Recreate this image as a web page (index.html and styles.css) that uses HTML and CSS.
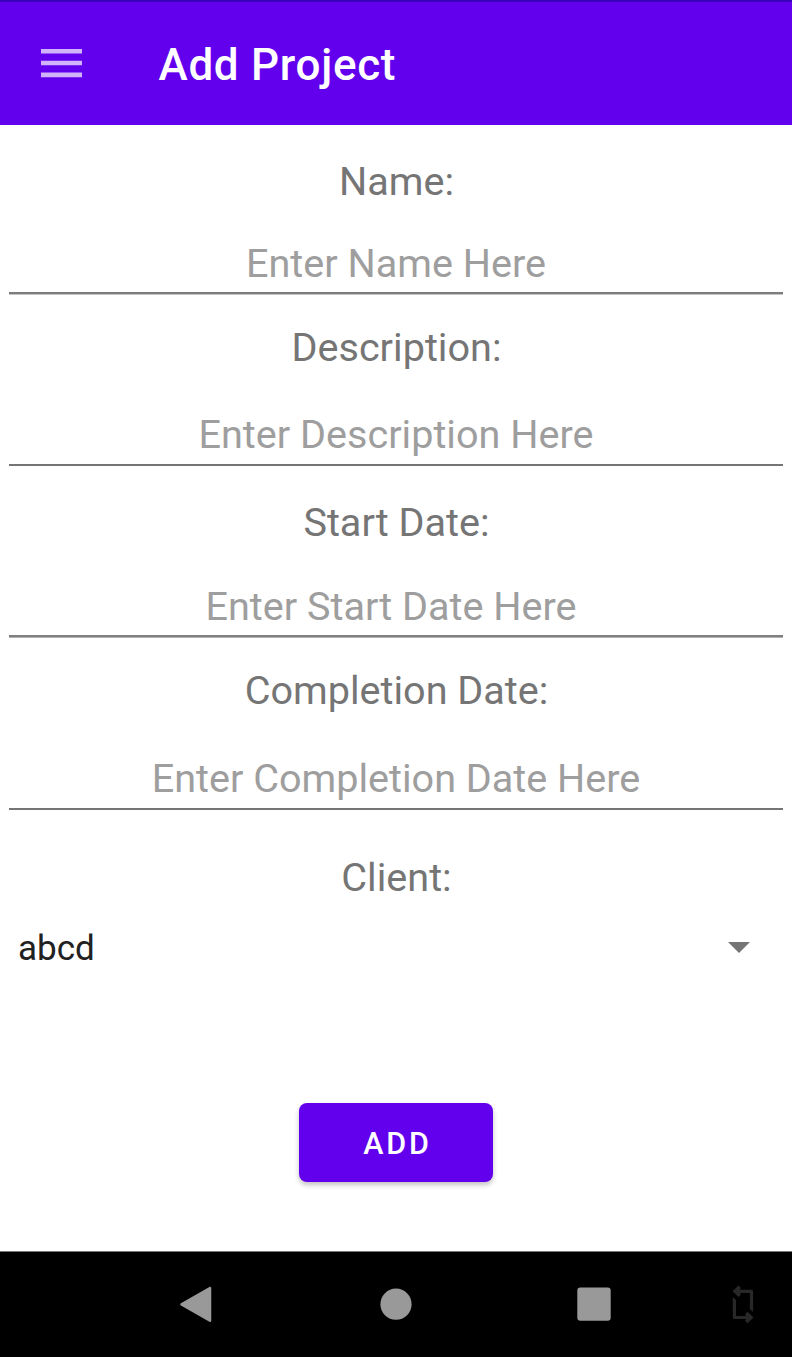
FILE: index.html
```html
<!DOCTYPE html>
<html lang="en">
<head>
<meta charset="utf-8">
<title>Add Project</title>
<link rel="stylesheet" href="styles.css">
</head>
<body>
<div class="screen">
  <header class="app-bar">
    <svg class="menu-icon" width="41" height="29" viewBox="0 0 41 29"><path d="M0 2.200h41M0 14h41M0 25.900h41" stroke="#d0b3fa" stroke-width="4.600"/></svg>
    <h1 class="title">Add Project</h1>
  </header>
  <main class="form">
    <label class="label name">Name:</label>
    <div class="field name-field">Enter Name Here</div>
    <label class="label description">Description:</label>
    <div class="field description-field">Enter Description Here</div>
    <label class="label start">Start Date:</label>
    <div class="field date-field">Enter Start Date Here</div>
    <label class="label completion">Completion Date:</label>
    <div class="field completion-field">Enter Completion Date Here</div>
    <label class="label client">Client:</label>
    <div class="spinner"><span>abcd</span><svg class="caret" width="22" height="11" viewBox="0 0 22 11"><path d="M0 0h22L11 11z" fill="#757575"/></svg></div>
    <button class="add">ADD</button>
  </main>
  <nav class="nav-bar">
    <svg width="792" height="105" viewBox="0 1 792 105">
      <path d="M181.500 53.300L210 37V69.700Z" fill="#999" stroke="#999" stroke-width="2.500" stroke-linejoin="round"/>
      <circle cx="396" cy="53.200" r="15.600" fill="#999"/>
      <rect x="577.300" y="36.400" width="33.400" height="33.400" rx="3" fill="#999"/>
      <g fill="none" stroke="#282828" stroke-width="3.200" stroke-linejoin="round">
        <path d="M735 40.300H751.500V58"/>
        <path d="M751 66.500H734.400V49"/>
      </g>
      <path d="M732.500 40.300L738.500 34.500L741 37L738.500 40.300L741 43.600L738.500 46.100ZM753.500 66.500L747.500 60.700L745 63.200L747.500 66.500L745 69.800L747.500 72.300Z" fill="#282828"/>
      <path d="M732.800 46l3.200 3v2h-3.200zM749.900 56h3.200v5l-3.200-3z" fill="#282828"/>
    </svg>
  </nav>
</div>
</body>
</html>
```
FILE: styles.css
```css
* { box-sizing: border-box; }
body { margin: 0; font-family: Roboto, sans-serif; background: #fff; }
.screen { width: 792px; height: 1357px; display: flex; flex-direction: column; }
.app-bar { height: 125px; flex: none; background: #6200ee; border-top: 2px solid #3b00bb; display: flex; align-items: center; padding-left: 41px; }
.menu-icon { margin: 0 76.5px 1px 0; }
.title { margin: 3px 0 0; font-size: 44px; line-height: 52px; font-weight: 500; letter-spacing: .7px; color: #fff; }
.form { height: 1126px; flex: none; display: flex; flex-direction: column; align-items: center; }
.label, .field { font-size: 39.6px; line-height: 48px; text-align: center; }
.label { height: 48px; padding-left: 1px; color: #757575; }
.field { width: 774px; color: #9e9e9e; border-bottom: 2px solid #757575; }
.name { margin-top: 33px; }
.name-field { height: 54px; margin-top: 34px; border-bottom-color: #7c7c7c; box-shadow: 0 1px #c4c4c4; }
.description { margin-top: 30px; }
.description-field { height: 55px; margin-top: 39px; }
.start { margin-top: 33px; }
.date-field { height: 54px; margin-top: 36px; padding-right: 10px; border-bottom-color: #808080; box-shadow: 0 1px #b0b0b0; }
.completion { margin-top: 30px; }
.completion-field { height: 55px; margin-top: 40px; }
.client { margin-top: 44px; }
.spinner { width: 100%; height: 48px; margin-top: 22px; padding: 0 42px 0 18px; display: flex; align-items: center; justify-content: space-between; font-size: 35px; color: #212121; }
.caret { margin-bottom: 2px; }
.add { width: 194px; height: 79px; margin-top: 131px; padding: 2px 0 0 3px; border: 0; border-radius: 8px; background: #6200ee; color: #fff; font: 500 30.500px Roboto, sans-serif; letter-spacing: 2.800px; box-shadow: 0 3px 5px rgba(0,0,0,.24); }
.nav-bar { height: 106px; flex: none; background: #000; border-top: 1px solid #777; }
.nav-bar svg { display: block; }
```
